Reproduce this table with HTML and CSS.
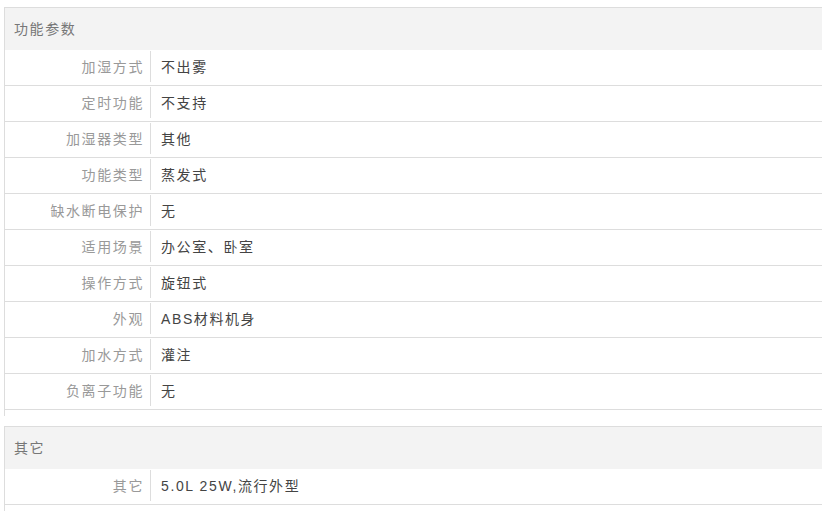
FILE: index.html
```html
<!DOCTYPE html>
<html lang="zh-CN">
<head>
<meta charset="utf-8">
<link rel="stylesheet" href="styles.css">
</head>
<body>
<div class="group">
  <div class="group-title">功能参数</div>
  <div class="row"><div class="label">加湿方式</div><div class="value">不出雾</div></div>
  <div class="row"><div class="label">定时功能</div><div class="value">不支持</div></div>
  <div class="row"><div class="label">加湿器类型</div><div class="value">其他</div></div>
  <div class="row"><div class="label">功能类型</div><div class="value">蒸发式</div></div>
  <div class="row"><div class="label">缺水断电保护</div><div class="value">无</div></div>
  <div class="row"><div class="label">适用场景</div><div class="value">办公室、卧室</div></div>
  <div class="row"><div class="label">操作方式</div><div class="value">旋钮式</div></div>
  <div class="row"><div class="label">外观</div><div class="value">ABS材料机身</div></div>
  <div class="row"><div class="label">加水方式</div><div class="value">灌注</div></div>
  <div class="row"><div class="label">负离子功能</div><div class="value">无</div></div>
</div>
<div class="group">
  <div class="group-title">其它</div>
  <div class="row"><div class="label">其它</div><div class="value">5.0L 25W,流行外型</div></div>
</div>
</body>
</html>
```
FILE: styles.css
```css
html, body {
  margin: 0;
  padding: 0;
  background: #fff;
  overflow: hidden;
}
body {
  padding-top: 7px;
  font-family: "Liberation Sans", "Noto Sans CJK SC", sans-serif;
  font-size: 14px;
  letter-spacing: 1.6px;
}
.group {
  margin-left: 4px;
  border-left: 1px solid #ddd;
  border-top: 1px solid #ddd;
  padding-bottom: 6px;
  margin-bottom: 10px;
}
.group-title {
  height: 42px;
  line-height: 42px;
  background: #f3f3f3;
  color: #777;
  padding-left: 9px;
}
.row {
  display: flex;
  height: 35px;
  border-bottom: 1px solid #ddd;
}
.label {
  width: 139px;
  padding-right: 6px;
  margin: 1px 0 3px;
  line-height: 32px;
  text-align: right;
  color: #999;
  border-right: 1px solid #ddd;
}
.value {
  padding-left: 10px;
  line-height: 35px;
  color: #444;
}
```
